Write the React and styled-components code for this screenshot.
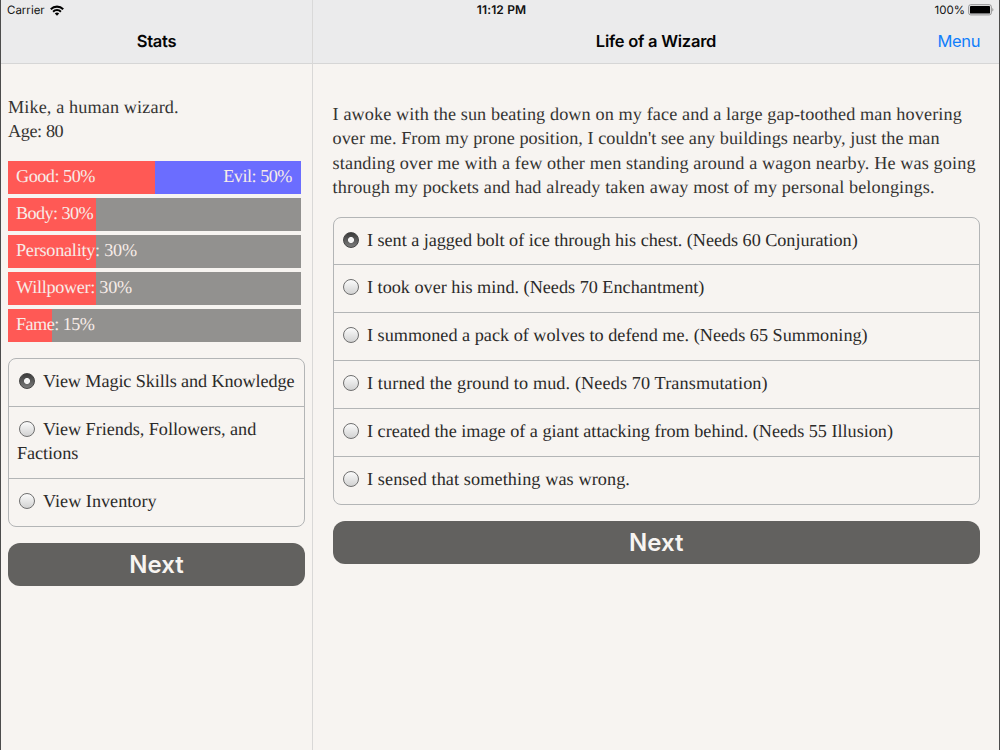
import { useState } from "react";
import styled, { createGlobalStyle } from "styled-components";

const GlobalStyle = createGlobalStyle`
  * {
    box-sizing: border-box;
  }

  body {
    margin: 0;
    background: #f7f4f1;
    color: #343331;
    font-family: "Liberation Serif", serif;
    font-size: 18.2px;
    line-height: 24.4px;
    text-rendering: geometricPrecision;
  }

  p {
    margin: 0;
  }
`;

const Screen = styled.div`
  display: flex;
  flex-direction: column;
  height: 750px;
  border-left: 1px solid #4c4c4c;
  border-right: 1px solid #4c4c4c;
  overflow: hidden;
`;

/* the panel divider carries on up through the status bar */
const StatusBar = styled.div`
  display: grid;
  grid-template-columns: 1fr auto 1fr;
  align-items: center;
  height: 20px;
  padding: 0 5px 0 6px;
  background: linear-gradient(#d9d9d9, #d9d9d9) 311px 0 / 1px 100% no-repeat
    #ebebec;
  color: #111;
  font-family: Inter, sans-serif;
  font-size: 11.5px;
  line-height: 20px;
`;

const StatusGroup = styled.div`
  display: flex;
  align-items: center;
  gap: ${(props) => props.$gap}px;
  justify-content: ${(props) => (props.$end ? "flex-end" : "flex-start")};
`;

const Clock = styled.span`
  padding-left: 2px;
  font-weight: 600;
  font-size: 12px;
  letter-spacing: 0.15px;
`;

const Panels = styled.div`
  display: flex;
  flex: 1;
`;

const Panel = styled.section`
  display: flex;
  flex-direction: column;
  width: ${(props) => (props.$side ? "312px" : "auto")};
  flex: ${(props) => (props.$side ? "none" : "1")};
  border-right: ${(props) => (props.$side ? "1px solid #d9d8d7" : "none")};
`;

const NavBar = styled.header`
  display: grid;
  grid-template-columns: 1fr auto 1fr;
  align-items: center;
  height: 44px;
  padding: 0 19px;
  background: #ebebec;
  border-bottom: 1px solid #d6d6d6;
  font-family: Inter, sans-serif;
`;

const Title = styled.h1`
  grid-column: 2;
  margin: 0;
  color: #050505;
  font-size: 16.5px;
  font-weight: 600;
  letter-spacing: -0.25px;
`;

const MenuButton = styled.button`
  justify-self: end;
  padding: 0;
  border: 0;
  background: none;
  color: #117efb;
  font: inherit;
  font-size: 16.5px;
  letter-spacing: -0.4px;
`;

const Body = styled.div`
  padding: ${(props) => props.$padding};
`;

const Line = styled.p`
  white-space: nowrap;
  letter-spacing: ${(props) => props.$track || 0}px;
`;

const Story = styled.div`
  margin-bottom: 17px;
`;

const Bars = styled.div`
  display: flex;
  flex-direction: column;
  gap: 4px;
  width: 293px;
  margin: 17.4px 0 16px;
`;

const Bar = styled.div`
  display: flex;
  justify-content: space-between;
  height: 33px;
  padding: 3px 9px 0 8px;
  background: linear-gradient(
    to right,
    #ff5955 ${(props) => props.$value}%,
    ${(props) => (props.$opposed ? "#6b6dff" : "#92918f")} 0
  );
  color: #f7ece8;
`;

const Options = styled.div`
  border: 1px solid #b3b5b6;
  border-radius: 8px;
  margin-bottom: 16px;
`;

const Option = styled.label`
  display: block;
  padding: 10px 0 12.45px 8px;
  color: #2b2a29;

  & + & {
    border-top: 1px solid #b3b5b6;
  }
`;

const Radio = styled.input`
  appearance: none;
  width: 16px;
  height: 16px;
  margin: 0 8px 0 ${(props) => props.$indent}px;
  vertical-align: -2px;
  border: 1px solid #6f6f6f;
  border-radius: 50%;
  background: linear-gradient(#fbfbfb, #d2d2d2);

  &:checked {
    border-color: #444;
    background: radial-gradient(circle, #f4f4f4 2.6px, transparent 3.4px),
      linear-gradient(#3b3b3b, #7b7b7b);
  }
`;

const NextButton = styled.button`
  display: block;
  width: 100%;
  height: 43px;
  padding: 0;
  border: 0;
  border-radius: 12px;
  background: #62615f;
  color: #f7f4f1;
  font-family: Inter, sans-serif;
  font-size: 24px;
  font-weight: 600;
`;

const stats = [
  { name: "Good", value: 50, opposite: "Evil", track: -0.5 },
  { name: "Body", value: 30, track: -0.6 },
  { name: "Personality", value: 30, track: -0.25 },
  { name: "Willpower", value: 30, track: -0.3 },
  { name: "Fame", value: 15, track: -0.55 },
];

const views = [
  { lines: ["View Magic Skills and Knowledge"], track: -0.1 },
  { lines: ["View Friends, Followers, and", "Factions"], track: -0.05 },
  { lines: ["View Inventory"], track: 0 },
];

const story = [
  { text: "I awoke with the sun beating down on my face and a large gap-toothed man hovering", track: 0.11 },
  { text: "over me. From my prone position, I couldn't see any buildings nearby, just the man", track: 0.04 },
  { text: "standing over me with a few other men standing around a wagon nearby. He was going", track: 0.12 },
  { text: "through my pockets and had already taken away most of my personal belongings.", track: 0.11 },
];

const choices = [
  { lines: ["I sent a jagged bolt of ice through his chest. (Needs 60 Conjuration)"], track: -0.04 },
  { lines: ["I took over his mind. (Needs 70 Enchantment)"], track: 0 },
  { lines: ["I summoned a pack of wolves to defend me. (Needs 65 Summoning)"], track: 0.01 },
  { lines: ["I turned the ground to mud. (Needs 70 Transmutation)"], track: 0.12 },
  { lines: ["I created the image of a giant attacking from behind. (Needs 55 Illusion)"], track: -0.01 },
  { lines: ["I sensed that something was wrong."], track: 0.1 },
];

function WifiIcon() {
  return (
    <svg width="14" height="11" viewBox="0 0 14 11" fill="none" stroke="#000">
      <path d="M.8 4.2a8.8 8.8 0 0 1 12.4 0" strokeWidth="2.1" />
      <path d="M3.1 6.7a5.5 5.5 0 0 1 7.8 0" strokeWidth="2" />
      <path d="M7 10.8 4.8 8.5a3.1 3.1 0 0 1 4.4 0z" fill="#000" stroke="none" />
    </svg>
  );
}

function BatteryIcon() {
  return (
    <svg width="26" height="12" viewBox="0 0 26 12">
      <rect x=".7" y=".7" width="22.6" height="10.2" rx="2" fill="none" stroke="#909090" />
      <rect x="2" y="2" width="20" height="7.6" rx=".7" fill="#000" />
      <path d="M24.3 4c1.5.6 1.5 3 0 3.6z" fill="#909090" />
    </svg>
  );
}

function OptionList({ name, items, indent }) {
  const [selected, setSelected] = useState(0);

  return (
    <Options>
      {items.map((item, index) => (
        <Option key={item.lines[0]}>
          {item.lines.map((line, row) => (
            <Line key={line} $track={item.track}>
              {row === 0 && (
                <Radio
                  type="radio"
                  name={name}
                  $indent={indent}
                  checked={selected === index}
                  onChange={() => setSelected(index)}
                />
              )}
              {line}
            </Line>
          ))}
        </Option>
      ))}
    </Options>
  );
}

function StatBar({ name, value, opposite, track }) {
  return (
    <Bar $value={value} $opposed={Boolean(opposite)}>
      <Line $track={track}>
        {name}: {value}%
      </Line>
      {opposite && (
        <Line $track={track}>
          {opposite}: {100 - value}%
        </Line>
      )}
    </Bar>
  );
}

function App() {
  return (
    <Screen>
      <GlobalStyle />
      <StatusBar>
        <StatusGroup $gap={5}>
          Carrier
          <WifiIcon />
        </StatusGroup>
        <Clock>11:12 PM</Clock>
        <StatusGroup $gap={3} $end>
          100%
          <BatteryIcon />
        </StatusGroup>
      </StatusBar>
      <Panels>
        <Panel $side>
          <NavBar>
            <Title>Stats</Title>
          </NavBar>
          <Body $padding="31px 7px 0 7px">
            <Line $track={0.12}>Mike, a human wizard.</Line>
            <Line $track={-0.4}>Age: 80</Line>
            <Bars>
              {stats.map((stat) => (
                <StatBar key={stat.name} {...stat} />
              ))}
            </Bars>
            <OptionList name="view" items={views} indent={2} />
            <NextButton>Next</NextButton>
          </Body>
        </Panel>
        <Panel>
          <NavBar>
            <Title>Life of a Wizard</Title>
            <MenuButton>Menu</MenuButton>
          </NavBar>
          <Body $padding="38px 19px 0 19.6px">
            <Story>
              {story.map((line) => (
                <Line key={line.text} $track={line.track}>
                  {line.text}
                </Line>
              ))}
            </Story>
            <OptionList name="choice" items={choices} indent={1.4} />
            <NextButton>Next</NextButton>
          </Body>
        </Panel>
      </Panels>
    </Screen>
  );
}

export default App;
